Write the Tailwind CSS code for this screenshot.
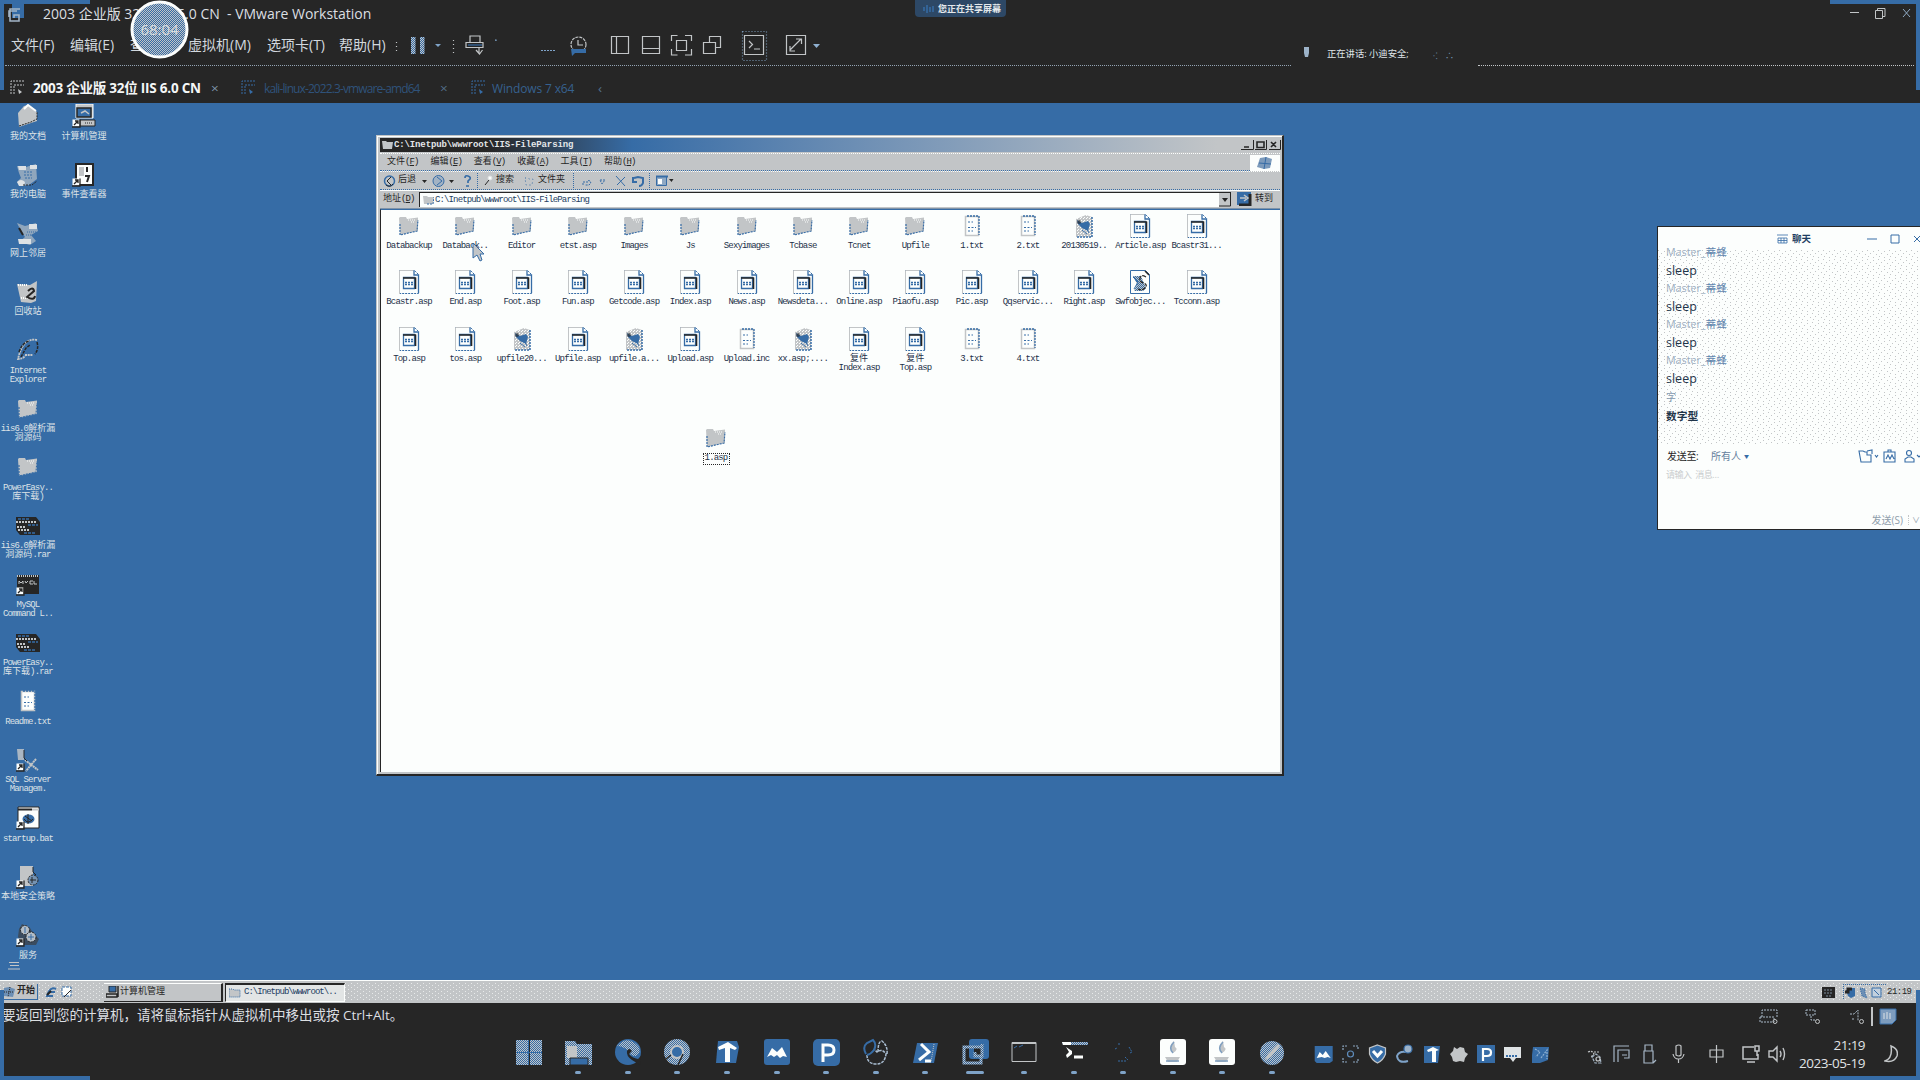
<!DOCTYPE html>
<html lang="zh-CN">
<head>
<meta charset="utf-8">
<title>2003 企业版 32位 IIS 6.0 CN - VMware Workstation</title>
<script src="https://cdn.jsdelivr.net/npm/@tailwindcss/browser@4"></script>
</head>
<body class="w-[1920px] h-[1080px] overflow-hidden bg-[#262626] font-['Open_Sans','Noto_Sans_CJK_SC',sans-serif]">
<svg width="0" height="0" class="absolute">
  <defs>
    <pattern id="chk" width="2" height="2" patternUnits="userSpaceOnUse"><rect width="2" height="2" fill="#366ca6"/><path d="M0 0h1v1H0zM1 1h1v1H1z" fill="#c2c5c7"/></pattern>
    <pattern id="wht" width="3" height="3" patternUnits="userSpaceOnUse"><rect width="3" height="3" fill="#c2c5c7"/><path d="M0 0h1v1H0zM2 1h1v1H2z" fill="#fcfefd"/></pattern>
    <pattern id="stip" width="11" height="9" patternUnits="userSpaceOnUse"><path d="M0 0h1v1H0zM6 1h1v1H6zM3 3h1v1H3zM9 4h1v1H9zM1 6h1v1H1zM6 7h1v1H6z" fill="#c2c5c7"/></pattern>
    <pattern id="stipw" width="6" height="4" patternUnits="userSpaceOnUse"><path d="M0 0h1v1H0zM3 2h1v1H3z" fill="#fcfefd"/></pattern>
  </defs>
  <symbol id="folder" viewBox="0 0 24 24"><path d="M2 4l1-1h6l1 2 11-1.500V17L3 21z" fill="#c2c5c7"/><path d="M3 10v11l17-4 1-11" fill="none" stroke="#366ca6" stroke-width="1.200" stroke-dasharray="2 1"/><path d="M11 6h7M14 8h4" stroke="#fcfefd" stroke-dasharray="1 1"/></symbol>
  <symbol id="asp" viewBox="0 0 24 24"><path d="M2.500.500h15l4 4v19h-19z" fill="#fcfefd" stroke="#366ca6" stroke-dasharray="2 1"/><path d="M2.500 24V.500h14" fill="none" stroke="#c2c5c7"/><path d="M17 .500v4.500h4.500V23" fill="none" stroke="#366ca6" stroke-width="1.300"/><path d="M6.500 7.500h11v11h-11z" fill="#fcfefd" stroke="#366ca6" stroke-width="1.300"/><path d="M6 8h13M18.500 7.500v11.500" stroke="#262626" stroke-width="1.600"/><path d="M8 12.500h8M8 14.500h9" stroke="#366ca6" stroke-width="1.500" stroke-dasharray="2 1"/></symbol>
  <symbol id="txt" viewBox="0 0 24 24"><path d="M5.500 2.500h13v19h-13z" fill="#fcfefd" stroke="#c2c5c7" stroke-width="1.500"/><path d="M7 2h12v19" fill="none" stroke="#366ca6" stroke-width="1.300" stroke-dasharray="2 1"/><path d="M8 8h5M8 13.500h8M8 17h5" stroke="#366ca6" stroke-dasharray="2 1.500"/></symbol>
  <symbol id="bird" viewBox="0 0 24 24"><path d="M4 5L14 1l6 2v20H4z" fill="url(#wht)"/><path d="M20 3v20H4" fill="none" stroke="#366ca6" stroke-width="1.500" stroke-dasharray="2 1"/><path d="M5 6l5 3 6-2 2 3-2 7-6-3-4-4z" fill="#366ca6"/><circle cx="7" cy="8" r="2" fill="#262626" opacity=".6"/><path d="M10 16l5 4M15 15l2 4" stroke="#366ca6"/></symbol>
  <symbol id="script" viewBox="0 0 24 24"><path d="M2.500.500h15l4 4v19h-19z" fill="#fcfefd" stroke="#366ca6"/><path d="M17 1l4 4" stroke="#262626" stroke-width="1.500"/><path d="M5 6h8l5 12-3 3H6l3-7z" fill="url(#chk)"/><path d="M18 7q-5-3-6 1t4 5q4 2 1 5t-7 1" fill="none" stroke="#262626" stroke-width="1.200" stroke-dasharray="4 1"/><path d="M5 7l5 5-4 7" fill="none" stroke="#366ca6"/></symbol>
  <symbol id="sc" viewBox="0 0 24 24"><path d="M.500 15.500h7v7h-7z" fill="#fcfefd"/><path d="M2 21l4-4M3 17h3v3M8 15.500V23H0" fill="none" stroke="#262626" stroke-width="1.300"/></symbol>
  <symbol id="docs" viewBox="0 0 24 24"><path d="M2 9l6-7 4-1 9 7v9l-6 2-12 4z" fill="#c2c5c7"/><path d="M8 5l4-4 8 6" fill="none" stroke="#fcfefd" stroke-width="2"/><path d="M3 22l12-4 6-3V8" fill="none" stroke="#262626" stroke-dasharray="2 1"/></symbol>
  <symbol id="pc" viewBox="0 0 24 24"><path d="M1 3l9 1 10-3 1 15-8 6-9 1-3-4 4-4-2-5z" fill="#8fa6bd"/><path d="M1 19q4-4 8 0l-1 4H3zM2 3h8v4H3zM14 2h7v4h-7z" fill="#dde1e4"/><path d="M8 9h8M8 12h8M9 15h7" stroke="#366ca6" stroke-dasharray="2 1"/><path d="M7 22h9l5-4" fill="none" stroke="#262626" stroke-dasharray="2 1"/></symbol>
  <symbol id="net" viewBox="0 0 24 24"><path d="M1 2l8 3 11-3 2 8-7 4 5 6-6 4-11-3 6-5-5-8z" fill="#8fa6bd"/><path d="M13 3h8v5h-8zM2 18h13v5H3z" fill="#dde1e4"/><path d="M11 11h9M10 14h6" stroke="#366ca6" stroke-dasharray="1 1"/><path d="M3 7l4 7" stroke="#262626" stroke-width="2"/></symbol>
  <symbol id="bin" viewBox="0 0 24 24"><path d="M1 4l13 1 7-4-1 20-5 2-10-1z" fill="#c2c5c7"/><path d="M2 5h9M5 18h8" stroke="#fcfefd" stroke-width="2" stroke-dasharray="1 1"/><path d="M12 11q5-5 6 0l-7 6q7 4 8-1" fill="none" stroke="#262626" stroke-width="2"/></symbol>
  <symbol id="ie" viewBox="0 0 24 24"><path d="M21 2Q7-1 2 21q5 0 7-3M9 17h8" fill="none" stroke="#c2c5c7" stroke-width="1.800" stroke-dasharray="2 .700"/><path d="M3 14Q6 5 13 3M5 19l5-9 4-3M21 4q2 7-2 12" fill="none" stroke="#262626" stroke-width="1.500" stroke-dasharray="3 1"/></symbol>
  <symbol id="rar" viewBox="0 0 24 24"><path d="M0 3h20l4 5v13H4L0 16z" fill="#262626"/><path d="M0 8h21M1 13h9M2 16h11" stroke="#c2c5c7" stroke-width="2" stroke-dasharray="2 1"/><path d="M2 5h12M12 11h10M8 19h12" stroke="#366ca6" stroke-width="1.500" stroke-dasharray="3 1"/></symbol>
  <symbol id="mysql" viewBox="0 0 24 24"><path d="M1 3h22v19H1z" fill="#262626"/><path d="M1 4h21" stroke="#c2c5c7" stroke-width="2" stroke-dasharray="1 1"/><path d="M3 12V9l2 2 2-2v3M9 9l1 2 2-2M17 9h-3v3h3M18 9v3h3" fill="none" stroke="#c2c5c7"/><use href="#sc"/></symbol>
  <symbol id="tools" viewBox="0 0 24 24"><path d="M1 1h7v11H2z" fill="#a9b6c3"/><path d="M9 12l13 10M20 11L10 23" stroke="#c2c5c7" stroke-width="2" stroke-dasharray="2 .500"/><path d="M8 2v8l3 3" fill="none" stroke="#262626"/><use href="#sc"/></symbol>
  <symbol id="bat" viewBox="0 0 24 24"><path d="M2 1h21v21H2z" fill="#fcfefd" stroke="#262626"/><path d="M2 3.500h14" stroke="#262626" stroke-width="2"/><path d="M16 3.500h7" stroke="#c2c5c7" stroke-width="2"/><ellipse cx="12.500" cy="13" rx="6" ry="4.500" fill="#366ca6"/><path d="M12 8v10M8 13q4 6 9 0M9 10l7 5" stroke="#262626" fill="none"/><use href="#sc"/></symbol>
  <symbol id="sec" viewBox="0 0 24 24"><path d="M4 1h13v20H4z" fill="#c2c5c7"/><path d="M17 2v5l3 3" stroke="#262626" fill="none"/><circle cx="17" cy="15" r="5" fill="#7593b2" stroke="#262626" stroke-dasharray="2 1"/><path d="M16 12v6M14 15h6" stroke="#262626"/><use href="#sc"/></symbol>
  <symbol id="svc" viewBox="0 0 24 24"><path d="M6 1l8 4 3 5 6 6-3 6H8L2 14l1-8z" fill="#3a4c60"/><circle cx="9" cy="7" r="4.500" fill="#b4bec7" stroke="#262626" stroke-dasharray="2 1"/><circle cx="15" cy="14" r="5" fill="#b4bec7" stroke="#262626" stroke-dasharray="2 1"/><path d="M9 4v6M15 11v6M12 14h6" stroke="#366ca6"/><use href="#sc"/></symbol>
  <symbol id="mmc" viewBox="0 0 24 24"><path d="M4 0h17v14H4z" fill="#c2c5c7" stroke="#fcfefd"/><path d="M5 4h14v9H5z" fill="#366ca6" stroke="#262626" stroke-width="1.500"/><path d="M9 9l4-2 4 3" stroke="#c2c5c7" fill="none" stroke-width="1.500"/><path d="M8 16h15v6H8z" fill="#c2c5c7" stroke="#262626"/><path d="M13 19h7" stroke="#262626" stroke-dasharray="1 1"/><use href="#sc"/></symbol>
  <symbol id="event" viewBox="0 0 24 24"><path d="M4 1h17v21H4z" fill="#fcfefd" stroke="#262626" stroke-width="2"/><path d="M7 4h5v9H7z" fill="#c2c5c7"/><path d="M15 4v5M13 13h4l-2 6" stroke="#262626" stroke-width="2" fill="none"/><use href="#sc"/></symbol>
  <symbol id="tabicon" viewBox="0 0 16 16"><path d="M1 14V1h13M4 14V5h10" fill="none" stroke="currentColor" stroke-dasharray="2 1"/><path d="M8 9l4 3-3 2z" fill="currentColor"/></symbol>
</svg>

<div class="relative w-[1920px] h-[1080px] flex flex-col overflow-hidden">
  <!-- title and menus of the virtual machine program -->
  <header class="h-[103px] shrink-0 flex flex-col text-[#dcdfe2]">
    <div class="h-[26px] flex items-center">
      <svg class="ml-[4px] shrink-0 w-[20px] h-[26px]" viewBox="0 0 20 26"><path d="M8 0h12v18H8z" fill="#366ca6"/><path d="M16 9H6v12h9v-6h-5v3M5 17V11h8" fill="none" stroke="#a3b5c7" stroke-width="1.600"/></svg>
      <div class="ml-[19px] whitespace-pre text-[14px]">2003 企业版 32位 IIS 6.0 CN  - VMware Workstation</div>
      <svg class="ml-auto mr-[8px] w-[64px] h-[14px]" viewBox="0 0 64 14" fill="none" stroke="#c2c5c7"><path d="M2 6.500h9M27.500 4.500h7v8h-7zM29.500 4V2.500h7.500v8h-2"/><path d="M55 3l7 8M62 3l-7 8" stroke="#8fa9c2"/></svg>
    </div>
    <div class="h-[39px] flex items-center pb-[3px] whitespace-nowrap text-[14px] text-[#d2d8de]">
      <span class="ml-[11px] w-[59px]">文件(F)</span><span class="w-[60px]">编辑(E)</span><span class="w-[58px]">查看(V)</span><span class="w-[79px]">虚拟机(M)</span><span class="w-[72px]">选项卡(T)</span><span class="w-[51px]">帮助(H)</span>
      <svg class="w-[430px] h-[34px] shrink-0 mt-px" viewBox="390 28 430 34" fill="none" stroke="#c2c5c7" stroke-width="1.200">
        <path d="M396.500 42v10M453.500 40v14" stroke-dasharray="1 3"/>
        <path d="M411 37h4.500v17H411zM420 37h4.500v17H420z" fill="url(#chk)" stroke="none"/>
        <path d="M435 44h6l-3 3z" fill="#7fa3c8" stroke="none"/>
        <path d="M470 42v-6h10v6M466 42.500h17v5h-17zM479 48v5M476 50l3.500 4 3-4"/><path d="M468 45h14" stroke="#366ca6"/>
        <path d="M495 40h1v1M541 50.500h15" stroke-dasharray="2 1" stroke="#7fa3c8"/>
        <circle cx="578.500" cy="44.500" r="7.500" stroke-dasharray="3 1"/><path d="M578 40v5h5"/><path d="M571 49h15v4h-11l-3 3z" fill="#366ca6" stroke="none"/>
        <path d="M611.500 36.500h17v17h-17zM616.500 36v18"/><path d="M642.500 36.500h17v17h-17zM642 48.500h18"/>
        <path d="M671.500 41v-5.500h6M685 35.500h6.500V41M671.500 49v6h6M685 55h6.500v-6M676.500 40.500h10v10h-10z"/>
        <path d="M703.500 42.500h12v11h-12zM709.500 42v-5.500h11v11h-5"/>
        <path d="M742.500 31.500h24v29h-24z" stroke="#7897b5" stroke-dasharray="1 2"/><path d="M744.500 35.500h19v19h-19zM749 41l3.500 3.500-3.500 3.500M754 49h6"/>
        <path d="M786.500 35.500h19v19h-19zM790 50l11-11M796 39h5.500v5M790 46v5h5"/><path d="M813 44h7l-3.500 4z" fill="#8fb0d0" stroke="none"/>
      </svg>
      <svg class="ml-[480px] w-[14px] h-[16px] mt-[18px]" viewBox="0 0 14 16"><path d="M4 2h5v6l-1 4H5L4 8z" fill="#9db3c9"/></svg>
      <span class="ml-[13px] mt-[19px] text-[9.300px] w-[112px] text-[#dfe4e8]">正在讲话: 小迪安全;</span>
      <span class="mt-[24px] -ml-[6px] text-[9px] text-[#7897b5]">⁖&nbsp;&nbsp;&nbsp;∴</span>
    </div>
    <div class="h-[2px] flex pl-[5px] pr-[6px]"><div class="w-[1286px] border-t border-dotted border-[#93a4b4]"></div><div class="ml-[187px] flex-1 border-t border-dotted border-[#c2c5c7]"></div></div>
    <div class="flex-1 flex items-center pt-[7px] text-[13.500px] whitespace-nowrap">
      <svg class="ml-[10px] w-[16px] h-[16px] mb-[2px] text-[#c2c5c7]"><use href="#tabicon"/></svg>
      <span class="ml-[7px] w-[176px] font-bold text-[#f4f6f6] tracking-[-0.230px]">2003 企业版 32位 IIS 6.0 CN</span>
      <span class="ml-[2px] w-[14px] text-[#8098b0]">×</span>
      <svg class="ml-[16px] w-[16px] h-[16px] mb-[2px] text-[#366ca6]"><use href="#tabicon"/></svg>
      <span class="ml-[7px] w-[176px] text-[#2f527a] text-[12px] tracking-[-0.900px]">kali-linux-2022.3-vmware-amd64</span>
      <span class="w-[14px] text-[#54708d]">×</span>
      <svg class="ml-[17px] w-[16px] h-[16px] mb-[2px] text-[#366ca6]"><use href="#tabicon"/></svg>
      <span class="ml-[5px] w-[106px] text-[#36618f] text-[12px] tracking-[-0.150px]">Windows 7 x64</span>
      <span class="text-[#54708d]">‹</span>
    </div>
  </header>

  <!-- guest desktop -->
  <main class="relative h-[877px] shrink-0 bg-[#366ca6] text-[#dde2e6] font-['Liberation_Mono','Noto_Sans_CJK_SC',monospace] text-[9px] leading-[9px]">
    <div class="flex">
      <div id="desk1" class="w-[56px] flex flex-col"></div>
      <div id="desk2" class="w-[56px] flex flex-col"></div>
    </div>
    <svg class="absolute left-[8px] top-[859px] w-[12px] h-[8px]" viewBox="0 0 12 8"><path d="M1 .500h10M2 3.500h9M0 7h12" stroke="#c2c5c7"/></svg>

    <!-- explorer window -->
    <section class="absolute left-[376px] top-[32px] w-[908px] h-[641px] bg-[#c2c5c7] border-t border-l border-[#c2c5c7] border-r-2 border-b-2 border-r-[#262626] border-b-[#262626] text-[#262626]">
      <div class="h-full border-t border-l border-[#fcfefd] pl-[2px] pr-[2px] pb-[2px] flex flex-col">
        <div class="mt-px h-[14px] flex items-center bg-linear-to-r from-[#262626] from-12% via-[#366ca6] via-28% to-[#c2c5c7] to-93% text-[#e4e7e9] shrink-0">
          <svg class="ml-[2px] w-[11px] h-[10px]" viewBox="0 0 11 10"><path d="M0 1h4l1 1h6l-1 7H1z" fill="#c2c5c7"/></svg>
          <span class="ml-[1px] mt-px font-bold text-[9px] tracking-[-0.130px] whitespace-nowrap">C:\Inetpub\wwwroot\IIS-FileParsing</span>
          <svg class="ml-auto -mr-px w-[40px] h-[12px]" viewBox="0 0 40 12"><path d="M0 1h12v10H0zM13 1h12v10H13zM27 1h12v10H27z" fill="#c2c5c7"/><path d="M0 10.500h12.500V1M14 10.500h11.500V1M28 10.500h11.500V1" fill="none" stroke="#262626"/><path d="M3 8h5M16 3h7v5.500h-7zM30 3l5 5M35 3l-5 5" fill="none" stroke="#262626" stroke-width="1.600"/></svg>
        </div>
        <div class="mt-px h-[18px] border-t border-t-[#fcfefd] border-b border-dotted border-b-[#366ca6] flex items-center shrink-0 pl-[7px] pt-px">
          <span class="w-[43.400px]">文件<span class="tracking-[-0.900px]">(<u>F</u>)</span></span><span class="w-[43.400px]">编辑<span class="tracking-[-0.900px]">(<u>E</u>)</span></span><span class="w-[43.400px]">查看<span class="tracking-[-0.900px]">(<u>V</u>)</span></span><span class="w-[43.400px]">收藏<span class="tracking-[-0.900px]">(<u>A</u>)</span></span><span class="w-[43.400px]">工具<span class="tracking-[-0.900px]">(<u>T</u>)</span></span><span class="w-[43.400px]">帮助<span class="tracking-[-0.900px]">(<u>H</u>)</span></span>
          <svg class="ml-auto w-[30px] h-[16px] bg-[#fcfefd]" viewBox="0 0 30 16"><path d="M10 3l6-1 6 2-2 9-6 1-7-2z" fill="#7c9abb"/><path d="M16 2l-2 12M9 8l12 1" stroke="#366ca6"/></svg>
        </div>
        <div class="h-[19px] border-t border-t-[#fcfefd] border-b border-dotted border-b-[#366ca6] flex items-center shrink-0 whitespace-nowrap">
          <svg class="w-[16px] h-[16px] ml-[2px] shrink-0" viewBox="0 0 16 16"><circle cx="7.500" cy="8" r="5" fill="#c2c5c7" stroke="#366ca6" stroke-width="1.500"/><path d="M9 4L5 8l4 4M4 12q4 3 7-1" fill="none" stroke="#262626"/></svg>
          <span class="w-[18px]">后退</span>
          <svg class="w-[80px] h-[16px] shrink-0" viewBox="416 172 80 16" fill="none" stroke="#366ca6"><path d="M422 179h5l-2.500 3zM449 179h5l-2.500 3z" fill="#262626" stroke="none"/><circle cx="438.500" cy="180" r="5.500" fill="#a3b3c4"/><path d="M437 176l5 4-5 4"/><path d="M465 177q0-3 3-2t2 3l-2 2v2M466 185h3" stroke-width="1.700"/><path d="M477.500 172v16" stroke-dasharray="1 1"/><path d="M485 184l4-5" stroke="#262626"/><circle cx="490" cy="177" r="2" stroke="#dfe2e3" fill="#fcfefd"/></svg>
          <span class="w-[18px]">搜索</span>
          <svg class="w-[24px] h-[16px] shrink-0" viewBox="514 172 24 16"><path d="M525 177h3l1 1h4l-1 6h-6z" fill="none" stroke="#366ca6" stroke-dasharray="1 3"/></svg>
          <span class="w-[27px]">文件夹</span>
          <svg class="w-[115px] h-[16px] shrink-0" viewBox="565 172 115 16" fill="none" stroke="#366ca6"><path d="M573.500 172v16M649.500 172v16" stroke-dasharray="1 1"/><path d="M583 184v-3h5l1-2 2 3-2 2h-4M600 179h5l-3 4z" stroke-dasharray="2 1"/><path d="M616 175l9 10M625 176l-8 8"/><path d="M634 177l4-1 5 1v5q-1 3-4 3M633 176v5h4" stroke-width="2"/><path d="M656.500 175.500h10v9h-10z" fill="#8fa9c4"/><path d="M656 175.500h12" stroke-width="2"/><path d="M658 178h4v5h-4z" fill="#fcfefd" stroke="none"/><path d="M669 178h4.500l-2 3z" fill="#262626" stroke="none"/></svg>
        </div>
        <div class="h-[17px] border-t border-[#fcfefd] flex items-center shrink-0">
          <span class="ml-[3px] w-[36px]">地址<span class="tracking-[-0.900px]">(<u>D</u>)</span></span>
          <div class="flex-1 h-[15px] bg-[#fcfefd] border-t border-l border-[#262626] flex items-center text-[#1f3e63]">
            <svg class="ml-[3px] w-[11px] h-[10px]" viewBox="0 0 11 10"><path d="M0 1h4l1 1h6l-1 7H1z" fill="#c2c5c7"/><path d="M4 9h6l1-7" stroke="#366ca6" fill="none" stroke-dasharray="2 1"/></svg>
            <span class="ml-[1px] mt-px tracking-[-0.870px]">C:\Inetpub\wwwroot\IIS-FileParsing</span>
            <svg class="ml-auto w-[12px] h-[14px]" viewBox="0 0 12 14"><path d="M0 0h12v14H0z" fill="#c2c5c7"/><path d="M0 13h11.500V0" fill="none" stroke="#262626"/><path d="M3 5h6L6 9z" fill="#262626"/></svg>
          </div>
          <svg class="ml-[6px] w-[15px] h-[14px]" viewBox="0 0 15 14"><path d="M0 0h14v13H0z" fill="#366ca6"/><path d="M13 2v11H2" stroke="#262626" stroke-width="3" fill="none"/><path d="M3 6h6M7 3l4 3-4 3" stroke="#c2c5c7" fill="none" stroke-width="1.500"/></svg>
          <span class="ml-[3px] w-[25px]">转到</span>
        </div>
        <div class="h-px mt-px bg-[#7f93a8] shrink-0"></div>
        <div class="relative flex-1 bg-[#fcfefd] border-t border-l border-t-[#366ca6] border-l-[#262626]">
          <div id="files" class="grid grid-cols-[repeat(15,56.250px)] auto-rows-[56.250px] text-[#1d3149]"></div>
          <div class="absolute left-[321px] top-[216px] w-[28px] flex flex-col items-center text-[#1d3149]">
            <svg class="w-[24px] h-[24px]"><use href="#folder"/></svg>
            <div class="mt-[3px] h-[12px] w-[27px] border border-dotted border-[#262626] text-center tracking-[-0.840px]">1.asp</div>
          </div>
          <svg class="absolute left-[91px] top-[33px] w-[12px] h-[20px]" viewBox="0 0 12 20"><path d="M1 0v15l4-3 3 6 2-1-2-6h4z" fill="#c2c5c7" stroke="#366ca6"/></svg>
        </div>
      </div>
    </section>

    <!-- meeting chat -->
    <section class="absolute left-[1657px] top-[123px] w-[263px] h-[304px] bg-[#fcfefd] border border-r-0 border-[#262626] text-[#262626] font-['Open_Sans','Noto_Sans_CJK_SC',sans-serif] leading-none flex flex-col whitespace-nowrap">
      <div class="h-[23px] pt-px flex items-center shrink-0">
        <svg class="ml-[119px] w-[11px] h-[10px]" viewBox="0 0 11 10" fill="none" stroke="#366ca6"><path d="M0 1h11M1 4h9v5H1zM1 6.500h9M4 4v5M7 4v5" opacity=".8"/></svg>
        <span class="ml-[4px] text-[9.500px] text-[#1f3e63] font-bold">聊天</span>
        <svg class="ml-auto w-[54px] h-[12px]" viewBox="0 0 54 12" fill="none" stroke="#366ca6"><path d="M1 6h10M25 2h8v8h-8zM48 3l6 6M54 3l-6 6"/></svg>
      </div>
      <div class="relative h-[195px] shrink-0">
        <svg class="absolute left-0 top-0 w-[263px] h-[195px]"><rect width="263" height="195" fill="url(#stip)"/></svg>
        <div id="msgs" class="relative pl-[8px] -mt-[5px] text-[12.500px]"></div>
      </div>
      <div class="h-[22px] flex items-center shrink-0 text-[10px]">
        <span class="ml-[9px] w-[44px] tracking-[-0.300px]">发送至:</span><span class="text-[#66819d] w-[33px]">所有人</span><span class="text-[5px] text-[#366ca6]">▼</span>
        <svg class="ml-auto w-[62px] h-[14px]" viewBox="1858 450 62 14" fill="none" stroke="#366ca6" stroke-width="1.100"><path d="M1859 452h4l2 1h2v3h4v7h-10zM1867 452l5-1v4M1875 456l1.500 2 1.500-2M1884 453h11v10h-11zM1888 453v-2h3v2M1886 460l2-4 2 4 2-4 2 4"/><circle cx="1909" cy="454" r="2.500"/><path d="M1905 463v-3l3-2h3l3 2v3zM1917 456l2 2 2-2"/></svg>
      </div>
      <div class="mt-[3px] ml-[8px] text-[9px] text-[#c9cccd] tracking-[-0.500px]">请输入&nbsp; 消息…</div>
      <div class="mt-auto mb-[4px] flex justify-end items-center text-[10px] text-[#8e9dab]"><span>发送(S)</span><div class="ml-[5px] mr-[3px] h-[10px] border-l border-dotted border-[#c2c5c7]"></div><span class="text-[8px]">∨</span></div>
    </section>
  </main>

  <!-- guest taskbar -->
  <div class="relative h-[23px] shrink-0 bg-[#c2c5c7] border-t border-[#fcfefd] flex items-center text-[#262626] font-['Liberation_Mono','Noto_Sans_CJK_SC',monospace] text-[9px] leading-none whitespace-nowrap">
    <svg class="absolute inset-0 w-full h-full"><rect y="2" width="1920" height="18" fill="url(#stipw)" opacity=".65"/></svg>
    <div class="relative ml-[4px] w-[34px] h-[16px] border-r border-b border-[#366ca6] bg-[#c2c5c7] flex items-center font-bold"><svg class="w-[13px] h-[12px] shrink-0" viewBox="0 0 13 12"><path d="M0 2l5-1 6 2-2 8-9-1z" fill="#6c8fb5"/><path d="M6 1L4 11M0 6h10" stroke="#262626" stroke-dasharray="1 1"/></svg>开始</div>
    <svg class="relative ml-[6px] w-[30px] h-[14px]" viewBox="0 0 30 14" fill="none"><path d="M12 4Q6 1 3 11h6M4 7h7" stroke="#366ca6" stroke-width="2"/><path d="M3 10l4-4" stroke="#262626" stroke-width="2"/><path d="M18 2h9v9h-9z" fill="#fcfefd" stroke="#366ca6" stroke-dasharray="3 1"/><path d="M20 12l7-7" stroke="#262626"/></svg>
    <div class="relative ml-[30px] w-[119px] h-[19px] border-t border-t-[#fcfefd] border-r-2 border-b border-b-[#262626] border-r-[#262626] bg-[#c2c5c7] flex items-center"><svg class="w-[14px] h-[12px] ml-[2px]" viewBox="0 0 14 12"><path d="M3 0h7v6H3z" fill="#366ca6" stroke="#262626"/><path d="M0 8h11v3H0zM12 0v11" fill="none" stroke="#262626" stroke-width="1.500"/></svg>计算机管理</div>
    <div class="relative ml-[2px] w-[120px] h-[19px] border-t-2 border-l border-[#262626] border-b border-b-[#fcfefd] border-r border-r-[#fcfefd] bg-[#e2e5e5] flex items-center text-[#1f3e63]"><svg class="w-[12px] h-[10px] ml-[3px] mr-[3px]" viewBox="0 0 12 10"><path d="M0 1h4l1 1h6v7H0z" fill="#c2c5c7" stroke="#366ca6" stroke-dasharray="1 1"/></svg><span class="tracking-[-0.970px]">C:\Inetpub\wwwroot\..</span></div>
    <svg class="relative ml-auto w-[68px] h-[18px]" viewBox="1820 982 68 18"><path d="M1823 986h13v11h-13z" fill="#262626"/><path d="M1825 989h9M1825 992h9M1827 995h5" stroke="#7f8f9f" stroke-dasharray="2 1"/><path d="M1844.500 985v14M1844 983.500h44" stroke="#366ca6" stroke-dasharray="1 1"/><path d="M1847 989h4v-2h5v8l-4 2-3-2z" fill="#366ca6"/><path d="M1846 991h3v-3h4" stroke="#262626" stroke-width="3" fill="none"/><path d="M1861 987l5 1v4l2 5-5-2z" fill="#6c8fb5" stroke="#366ca6" stroke-dasharray="1 1"/><path d="M1873 987h9v9h-9z" fill="#c2d0de" stroke="#366ca6"/><path d="M1875 989l5 5" stroke="#366ca6"/></svg>
    <span class="relative w-[32px] mr-px tracking-[-0.500px]">21:19</span>
  </div>

  <!-- hint line and host taskbar -->
  <div class="h-[25px] shrink-0 flex items-center text-[13.500px] text-[#dcdfe2] whitespace-nowrap">
    <span class="ml-[2px]">要返回到您的计算机，请将鼠标指针从虚拟机中移出或按 Ctrl+Alt。</span>
    <svg class="ml-auto mr-[20px] w-[144px] h-[24px]" viewBox="1756 1003 144 24" fill="none" stroke="#a9b9c8"><path d="M1762 1016v-7h15v7M1760 1016h14v5h-14zM1806 1009h9v5h-9zM1811 1015v4h4M1850 1013h4l4-4v11M1852 1018h2" stroke-dasharray="2 1"/><g stroke="#c2c5c7"><circle cx="1775" cy="1020.500" r="2"/><circle cx="1817.500" cy="1020.500" r="2"/><circle cx="1861.500" cy="1020.500" r="2"/></g><path d="M1872 1006v19" stroke="#c2c5c7" stroke-width="2"/><path d="M1880 1008h16v11l-4 4h-12z" fill="#7d9cbe" stroke="#366ca6"/><path d="M1884 1012v6M1887 1011v7M1890 1012v6" stroke="#dfe3e6"/></svg>
  </div>
  <footer class="flex-1 flex items-center text-[#e0e3e5]">
    <div id="dock" class="ml-[504px] flex shrink-0"></div>
    <svg class="w-[480px] h-[40px] ml-[13px] shrink-0" viewBox="1310 1033 480 40" fill="none" stroke="#c2c5c7" stroke-width="1.200">
      <g transform="translate(1323.700 1053)"><path d="M-9-8H9V7L6 9H-7L-9 7z" fill="#366ca6" stroke="none"/><path d="M-7 4l3-6 3 3 3-4 5 7-3-1-3 1-3-1z" fill="#fcfefd" stroke="none"/></g>
      <path d="M1343 1049v-4h5M1353 1045h5v4M1343 1057v4h5M1353 1061h5v-4" stroke="#8ea8c2" stroke-dasharray="2 1"/><circle cx="1350.500" cy="1053" r="3" stroke="#5f8cbb"/>
      <path d="M1377.500 1044l8 3v6q-2 6-8 9-6-3-8-9v-6z" fill="#366ca6"/><path d="M1373 1050l4.500 5 4.500-5" stroke="#fcfefd" stroke-width="3"/>
      <path d="M1408 1060q-10 3-11-5 2-5 9-4" stroke="#7fa3c8" stroke-width="2"/><circle cx="1408" cy="1048" r="4" fill="#9db3c9" stroke="#366ca6"/>
      <path d="M1424 1045h16l-2 17h-14z" fill="#366ca6" stroke="none"/><path d="M1427 1049l6-3 6 3-3 1v11h-4v-11l-4 1z" fill="#fcfefd" stroke="none"/>
      <path d="M1454 1046l3 2 3-2 4 1 1 4 3 2-3 4-1 4-4-1-4 1-3-1-1-4-2-3 3-3z" fill="#c2c5c7" stroke="none"/>
      <path d="M1477 1044h18v18h-18z" fill="#366ca6" stroke="none"/><path d="M1483 1060v-12h4q4 0 4 3.500t-4 3.500h-4" stroke="#fcfefd" stroke-width="2.200"/>
      <path d="M1504 1046h17v11h-5l-3 4-3-4h-6z" fill="#dfe3e5" stroke="none"/><path d="M1506 1055h12" stroke="#366ca6" stroke-width="2" stroke-dasharray="2 1"/>
      <path d="M1533 1046h16l-1 13-8 3h-8v-8z" fill="#366ca6" stroke="none"/><path d="M1535 1048l5 3-4 5M1541 1057l6-8v9" stroke="#8fb0d0" stroke-dasharray="2 1"/>
      <path d="M1588 1051q4-2 6 2l-3 3M1594 1051h6" stroke-dasharray="2 1"/><path d="M1592 1056l4-3 4 3 1 6h-6z" stroke="#a5b5c5" stroke-dasharray="3 1"/><circle cx="1598" cy="1058" r="2"/>
      <path d="M1614 1061v-16h15M1618 1061v-12h11v8h-5M1622 1054h5" stroke="#a5b5c5"/><path d="M1644 1050h9v12h-9zM1645 1050v-6h7v6M1653 1062l3-3" stroke="#a5b5c5"/>
      <path d="M1676 1045q3-2 5 0v9q-2 2-5 0zM1673 1053q1 5 5.500 5t5.500-5M1678.500 1058v4"/>
      <path d="M1710 1049h13v7h-13zM1716.500 1044v18"/>
      <path d="M1754 1046h-11v12h15v-5M1747 1061h8M1755 1045h4v5h-4zM1757 1050v5" stroke-width="1.500"/>
      <path d="M1769 1050h4l4-4v14l-4-4h-4zM1780 1050q2 3 0 6M1783 1047q3 6 0 12" stroke-width="1.400"/>
    </svg>
    <div class="ml-auto mr-[19px] w-[72px] flex flex-col items-end text-[13.500px] leading-[18px] tracking-[-0.450px] whitespace-nowrap shrink-0"><span class="tracking-[-0.600px]">21:19</span><span>2023-05-19</span></div>
    <svg class="mr-[22px] w-[14px] h-[20px] shrink-0" viewBox="0 0 14 20"><path d="M7 2q8 3 6 10-3 7-12 5 8-3 6-15z" fill="none" stroke="#c2c5c7" stroke-width="1.500"/></svg>
  </footer>

  <!-- screen sharing frame -->
  <div class="absolute left-0 top-0 w-[90px] h-[4px] bg-[#366ca6]"></div><div class="absolute left-0 top-0 w-[4px] h-[90px] bg-[#366ca6]"></div>
  <div class="absolute right-0 top-0 w-[90px] h-[4px] bg-[#366ca6]"></div><div class="absolute right-0 top-0 w-[4px] h-[90px] bg-[#366ca6]"></div>
  <div class="absolute left-0 bottom-0 w-[90px] h-[4px] bg-[#366ca6]"></div><div class="absolute left-0 bottom-0 w-[4px] h-[90px] bg-[#366ca6]"></div>
  <div class="absolute right-0 bottom-0 w-[90px] h-[4px] bg-[#366ca6]"></div><div class="absolute right-0 bottom-0 w-[4px] h-[90px] bg-[#366ca6]"></div>
  <div class="absolute left-[915px] top-0 w-[91px] h-[17px] rounded-b bg-[#2d4866] flex items-center text-[9px] text-[#e3e8eb] font-bold whitespace-nowrap"><svg class="ml-[8px] w-[15px] h-[10px]" viewBox="0 0 15 10"><path d="M1 3v4M4 1v8M7 3v5M10 2v6" stroke="#366ca6" stroke-width="1.500"/></svg>您正在共享屏幕</div>
  <div class="absolute left-[130px] top-0 w-[59px] h-[59px]">
    <svg class="absolute inset-0" viewBox="0 0 59 59"><circle cx="29.500" cy="29.500" r="27.500" fill="url(#chk)" stroke="#fcfefd" stroke-width="3"/></svg>
    <div class="relative h-full flex items-center justify-center text-[15px] text-[#d8dcdf]">68:04</div>
  </div>
</div>

<script>
const label = t => t.split('|').map(l => l.replace(/[\x21-\x7e ]+/g, s => `<span class="tracking-[-0.840px]">${s}</span>`)).join('<br>');
const desk = list => list.map(([i, t]) => `<div class="h-[58.500px] flex flex-col items-center text-center whitespace-nowrap"><svg class="w-[24px] h-[24px] mt-[1px] shrink-0"><use href="#${i}"/></svg><div class="mt-[4.500px] -ml-[4px] -mr-[4px]">${label(t)}</div></div>`).join('');
document.getElementById('desk1').innerHTML = desk([['docs','我的文档'],['pc','我的电脑'],['net','网上邻居'],['bin','回收站'],['ie','Internet|Explorer'],['folder','iis6.0解析漏|洞源码'],['folder','PowerEasy..|库下载)'],['rar','iis6.0解析漏|洞源码.rar'],['mysql','MySQL|Command L..'],['rar','PowerEasy..|库下载).rar'],['txt','Readme.txt'],['tools','SQL Server|Managem.'],['bat','startup.bat'],['sec','本地安全策略'],['svc','服务']]);
document.getElementById('desk2').innerHTML = desk([['mmc','计算机管理'],['event','事件查看器']]);

const files = 'folder:Databackup,folder:Databack..,folder:Editor,folder:etst.asp,folder:Images,folder:Js,folder:Sexyimages,folder:Tcbase,folder:Tcnet,folder:Upfile,txt:1.txt,txt:2.txt,bird:20130519..,asp:Article.asp,asp:Bcastr31...,asp:Bcastr.asp,asp:End.asp,asp:Foot.asp,asp:Fun.asp,asp:Getcode.asp,asp:Index.asp,asp:News.asp,asp:Newsdeta...,asp:Online.asp,asp:Piaofu.asp,asp:Pic.asp,asp:Qqservic...,asp:Right.asp,script:Swfobjec...,asp:Tcconn.asp,asp:Top.asp,asp:tos.asp,bird:upfile20...,asp:Upfile.asp,bird:upfile.a...,asp:Upload.asp,txt:Upload.inc,bird:xx.asp;....,asp:复件|Index.asp,asp:复件|Top.asp,txt:3.txt,txt:4.txt'.split(',');
document.getElementById('files').innerHTML = files.map(f => { const [i, t] = f.split(':'); return `<div class="flex flex-col items-center text-center whitespace-nowrap"><svg class="w-[24px] h-[24px] mt-[4px] shrink-0"><use href="#${i}"/></svg><div class="mt-[4px]">${label(t)}</div></div>`; }).join('');

const name = '<div class="h-[16px] pb-px flex items-center text-[10.700px] text-[#9badbf]">Master_<span class="text-[#5f85ad]">蒂蜂</span></div>';
document.getElementById('msgs').innerHTML = (name + '<div class="h-[20px] flex items-center text-[#1f3449]">sleep</div>').repeat(4) + '<div class="h-[15px] flex items-center text-[10px] text-[#8298ae]">字</div><div class="h-[24px] flex items-center text-[10.700px] font-bold text-[#1f3449]">数字型</div>';

const apps = [
 '<path d="M0 1h12v12H0zM14 1h12v12H14zM0 14h12v12H0zM14 14h12v12H14z" fill="url(#chk)"/><path d="M12.500 1v25M0 13.500h26" stroke="#366ca6"/>',
 '<path d="M0 2h10l2 3h15v21H0z" fill="url(#chk)"/><path d="M2 7h10v12H2z" fill="#c2c5c7"/><path d="M5 19h18v7H5z" fill="#366ca6" stroke="#262626"/>',
 '<circle cx="13" cy="13" r="13" fill="#366ca6"/><path d="M2 7Q13-5 24 8q2 7-3 9-7 0-7-5Q7 7 2 7z" fill="url(#chk)"/><path d="M12 12q2-4 5 0l-3 3q3 4 9 5l3-3-1 9-8-5q-6-4-5-9z" fill="#262626"/>',
 '<circle cx="13" cy="13" r="13" fill="url(#chk)"/><circle cx="13" cy="13" r="6" fill="#366ca6" stroke="#c2c5c7" stroke-width="2"/><path d="M19 15l-5 11M2 20l5-4" stroke="#262626" stroke-width="1.500"/>',
 '<path d="M4 2h19l2 6-3 16H2l1-12z" fill="#366ca6"/><path d="M4 8l10-5 9 6-2 2-5-2v14h-5V9l-6 2z" fill="#fcfefd"/>',
 '<rect width="26" height="26" rx="3" fill="#366ca6"/><path d="M3 18L8 9l5 4 5-5 5 10-4-1-3 2-3-3-3 2-3-2z" fill="#fcfefd"/>',
 '<rect width="27" height="27" rx="5" fill="#366ca6"/><path d="M10 23V6h5q6 0 6 5t-6 5h-5" fill="none" stroke="#fcfefd" stroke-width="3"/>',
 '<g fill="none" stroke="#a9bdd1" stroke-width="1.500"><path d="M4 16q0 9 9 9t10-10q-4-6-9-2l-3-3M15 13Q15 2 19 2q6 5 5 13" stroke-dasharray="3 1"/></g><path d="M3 15Q-1 8 4 4l6-3q4 4 1 10-3 4-7 5" stroke="#366ca6" stroke-width="2" fill="none"/>',
 '<path d="M5 4h21l-4 20H1z" fill="#366ca6"/><path d="M9 5l8 8L7 21M13 22h6" fill="none" stroke="#fcfefd" stroke-width="3"/><path d="M22 5l-3 18" stroke="#c2c5c7" stroke-dasharray="1 1"/>',
 '<rect x="7" width="20" height="20" rx="3" fill="#366ca6"/><path d="M12 7h9v9h-9z" fill="#262626"/><path d="M19 9V8H2v16h17v-7M13 13v4h7V5" fill="none" stroke="url(#chk)" stroke-width="3"/>',
 '<path d="M1 3.500h24v19H1z" fill="none" stroke="#c2c5c7"/><path d="M1 4h24" stroke="#c2c5c7" stroke-width="2"/><path d="M3 9l3-2M8 8l4-2" stroke="#366ca6"/>',
 '<path d="M1 3h26v3H2z" fill="url(#chk)"/><path d="M1 3h9v3H2zM5 8l6 4v3l-5 4-1-3 3-3z" fill="#fcfefd"/><path d="M13 18h9" stroke="#fcfefd" stroke-width="3"/>',
 '<path d="M5 10l2-1M9 4v2M19 8l3 5-2 1M8 22h9M15 18l3 3" stroke="#366ca6" fill="none" stroke-dasharray="2 1"/>',
 '<rect width="26" height="26" rx="3" fill="#fcfefd"/><path d="M14 2q-7 6-1 12 6-4 2-6M5 18h15l-3 5H8z" fill="#c2c5c7"/><path d="M14 3q-6 6-1 11M6 22h13" fill="none" stroke="#7f9fc0" stroke-width="1.500"/>',
 '<rect width="26" height="26" rx="3" fill="#fcfefd"/><path d="M14 2q-7 6-1 12 6-4 2-6M5 18h15l-3 5H8z" fill="#c2c5c7"/><path d="M14 3q-6 6-1 11M6 22h13" fill="none" stroke="#7f9fc0" stroke-width="1.500"/>',
 '<circle cx="13" cy="14" r="12" fill="url(#chk)"/><path d="M5 22l4-7L19 5l2 2-9 11z" fill="#c2c5c7"/>'
];
document.getElementById('dock').innerHTML = apps.map((a, i) => `<div class="w-[49.550px] flex flex-col items-center"><svg class="w-[28px] h-[28px] mt-[4px]" viewBox="-1 -1 28 28">${a}</svg><div class="${i === 9 ? 'mt-[5px] w-[18px] h-[3px] rounded bg-[#7fa3c8]' : i ? 'mt-[5px] w-[6px] h-[3px] rounded bg-[#7fa3c8]' : 'mt-[5px] w-[6px] h-[3px]'}"></div></div>`).join('');
</script>
</body>
</html>
